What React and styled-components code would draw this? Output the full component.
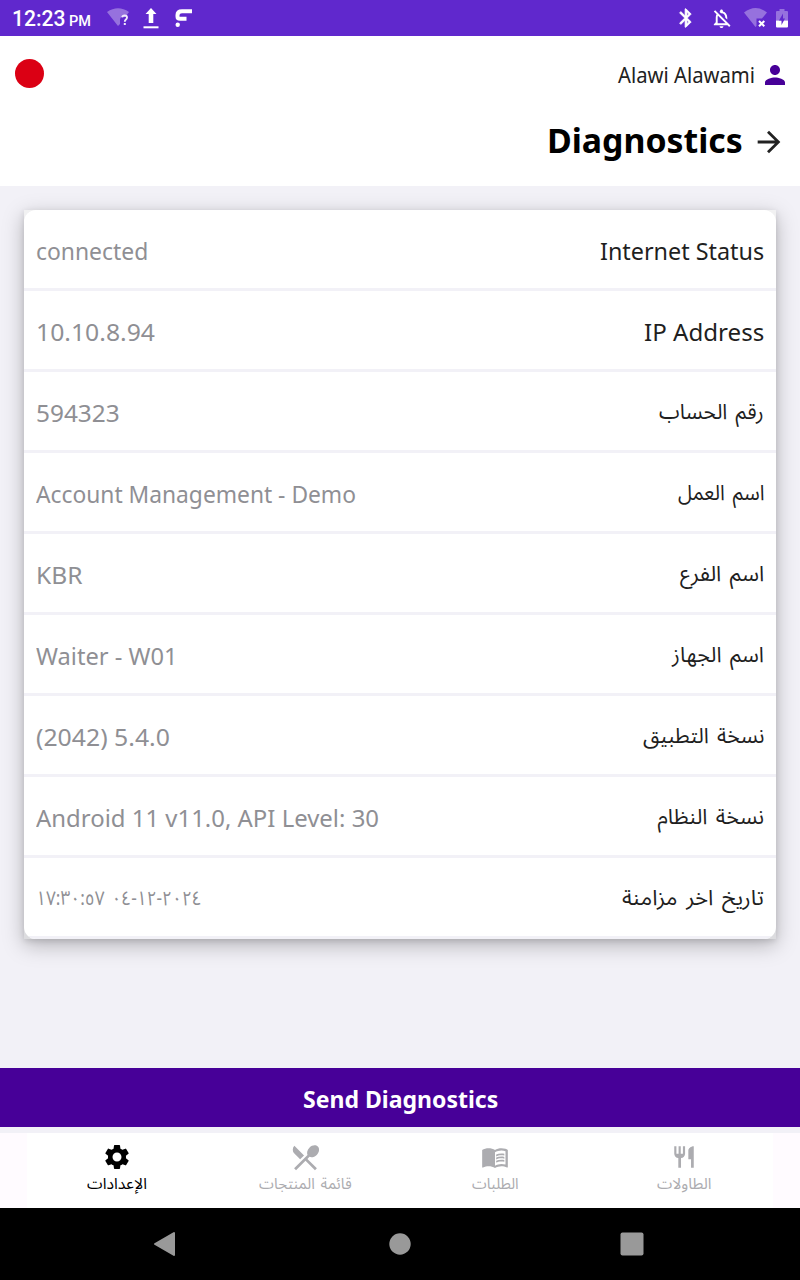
import React, { useLayoutEffect, useRef, useState } from 'react'
import styled, { createGlobalStyle } from 'styled-components'
import {
  MdArrowForward,
  MdBluetooth,
  MdMenuBook,
  MdOutlineNotificationsOff,
  MdPerson,
  MdRestaurant,
  MdRestaurantMenu,
  MdSettings,
} from 'react-icons/md'

const GlobalStyle = createGlobalStyle`
  * {
    box-sizing: border-box;
  }
  body {
    margin: 0;
    font-family: "Noto Sans", "Noto Sans Arabic", "DejaVu Sans", sans-serif;
  }
  svg {
    display: block;
    flex: none;
  }
`

const Screen = styled.div`
  width: 800px;
  height: 1280px;
  display: flex;
  flex-direction: column;
  background: #f2f1f7;
  overflow: hidden;
`

const StatusBar = styled.div`
  height: 36px;
  flex: none;
  padding: 0 12px 0 12px;
  display: flex;
  align-items: center;
  justify-content: space-between;
  background: #6028cd;
  color: #fff;
  font-family: Roboto, sans-serif;
`

const StatusGroup = styled.div`
  display: flex;
  align-items: center;
`

const Clock = styled.div`
  height: 36px;
  padding-top: 1px;
  display: flex;
  align-items: baseline;
  gap: 3px;
  margin-right: 16px;
`

const StatusIcon = styled.div`
  margin-left: ${(props) => props.$gap || 0}px;
  ${(props) => props.$bold && 'path:not([fill="none"]) { stroke: #fff; stroke-width: 0.8px; }'}
`

const Header = styled.div`
  height: 150px;
  flex: none;
  padding: 0 14px 0 15px;
  background: #fff;
`

const UserRow = styled.div`
  height: 76px;
  display: flex;
  align-items: center;
  justify-content: space-between;
`

const StatusDot = styled.div`
  width: 29px;
  height: 29px;
  margin-bottom: 1px;
  border-radius: 50%;
  background: #db0014;
`

const User = styled.div`
  display: flex;
  align-items: center;
  gap: 5px;
  margin-right: -4px;
  padding-top: 1px;
  color: #222;
`

const TitleRow = styled.div`
  height: 60px;
  display: flex;
  align-items: center;
  justify-content: flex-end;
  gap: 9px;
`

const Title = styled.div`
  padding-bottom: 4px;
`

const Line = styled.div`
  width: ${(props) => props.$width}px;
  display: flex;
  flex: none;
  justify-content: ${(props) => (props.$right ? 'flex-end' : 'flex-start')};
  font-size: ${(props) => props.$size}px;
  font-weight: ${(props) => props.$weight || 400};
  line-height: ${(props) => props.$lineHeight || 36}px;
  color: ${(props) => props.$color || 'inherit'};
`

const Run = styled.span`
  display: block;
  flex: none;
  white-space: nowrap;
  word-spacing: ${(props) => (props.$rtl ? '0.13em' : 'normal')};
  transform-origin: ${(props) => (props.$right ? '100% 50%' : '0 50%')};
`

const Content = styled.div`
  flex: 1;
  padding: 24px 24px 0;
`

const CardShadow = styled.div`
  background: linear-gradient(#f1f1f2, #dcdcdf);
  box-shadow: 0 6px 20px rgba(0, 0, 0, 0.26), 0 2px 6px rgba(0, 0, 0, 0.12);
`

const Card = styled.div`
  border-radius: 12px;
  overflow: hidden;
  background: #fff;
`

const Row = styled.div`
  height: 81px;
  padding: 0 12px;
  display: flex;
  align-items: center;
  justify-content: space-between;
  border-bottom: 3px solid #f2f1f7;
`

const Cell = styled.div`
  padding-top: ${(props) => props.$drop || 0}px;
`

const SendButton = styled.button`
  width: 100%;
  height: 59px;
  flex: none;
  margin-bottom: 6px;
  padding: 3px 0 0;
  display: flex;
  align-items: center;
  justify-content: center;
  border: none;
  background: #470098;
  color: #fff;
  font-family: inherit;
`

const TabBar = styled.div`
  height: 75px;
  flex: none;
  padding: 0 27px;
  background: #fffbff;
`

const Tabs = styled.div`
  height: 100%;
  padding-left: 1px;
  display: grid;
  grid-template-columns: repeat(4, 189.3px);
  justify-content: center;
  background: #fff;
`

const Tab = styled.div`
  display: flex;
  flex-direction: column;
  align-items: center;
  padding-top: 8px;
  color: ${(props) => (props.$active ? '#000' : '#acacb0')};
`

const TabIcon = styled.div`
  height: 32px;
  display: flex;
  align-items: center;
`

const NavBar = styled.div`
  height: 72px;
  flex: none;
  padding: 0 152px;
  display: grid;
  grid-template-columns: 1fr auto 1fr;
  align-items: center;
  background: #000;

  svg:last-child {
    justify-self: end;
  }
`

// Keeps a label at a fixed width, whatever font ends up drawing it
const FitText = ({ width, right, rtl, children, ...rest }) => {
  const ref = useRef(null)
  const [scale, setScale] = useState(1)

  useLayoutEffect(() => {
    setScale(width / ref.current.offsetWidth)
  }, [width, children])

  return (
    <Line $width={width} $right={right} {...rest}>
      <Run
        ref={ref}
        dir={rtl ? 'rtl' : 'ltr'}
        $rtl={rtl}
        $right={right}
        style={{ transform: `scaleX(${scale})` }}
      >
        {children}
      </Run>
    </Line>
  )
}

const WifiUnknownIcon = () => (
  <svg width="22" height="20" viewBox="0 0 22 20">
    <path d="M0 4Q11-3.500 22 4L19 8Q13 8 13 12V16L11 18Z" fill="#fff" fillOpacity=".34" />
    <path d="M15.200 9.300Q15.400 7.500 17.700 7.500Q20 7.600 20 9.500Q20 10.700 18.700 11.700Q17.800 12.500 17.800 13.800" fill="none" stroke="#efe9fb" strokeWidth="1.900" />
    <rect x="16.800" y="15" width="2" height="2" fill="#efe9fb" />
  </svg>
)

const UploadIcon = () => (
  <svg width="16" height="21" viewBox="0 0 16 21">
    <path d="M8 0L13.500 6H10.300V15H5.700V6H2.500Z" fill="#fff" />
    <rect x="0.500" y="18.300" width="15" height="2" fill="#fff" />
  </svg>
)

const BrandIcon = () => (
  <svg width="18" height="19" viewBox="0 0 18 19">
    <path d="M17 2.200H7Q2.500 2.200 2.500 6V7.500Q2.500 9.800 5 9.800H11.500" fill="none" stroke="#fff" strokeWidth="4" />
    <circle cx="2.700" cy="15.800" r="2.200" fill="#fff" />
  </svg>
)

const WifiOffIcon = () => (
  <svg width="23" height="20" viewBox="0 0 23 20">
    <path d="M0 4.500Q11.500-4.500 23 4.500L18 10.500H12.500V18L11.500 19Z" fill="#fff" fillOpacity=".34" />
    <path d="M15 13L20.300 18.300M20.300 13L15 18.300" stroke="#fff" strokeWidth="2" />
  </svg>
)

const BatteryIcon = () => (
  <svg width="12" height="19" viewBox="0 0 12 19">
    <path d="M1 2H3.500V0H8.500V2H11Q12 2 12 3V11.500H0V3Q0 2 1 2Z" fill="#fff" fillOpacity=".34" />
    <path d="M0 11.500H12V17.500Q12 18.500 11 18.500H1Q0 18.500 0 17.500Z" fill="#fff" />
    <path d="M7 4.500L3 11.500H5.500V16L9 9.500H7Z" fill="#6028cd" />
  </svg>
)

const rows = [
  { label: 'Internet Status', labelWidth: 164, value: 'connected', valueWidth: 112 },
  { label: 'IP Address', labelWidth: 120, value: '10.10.8.94', valueWidth: 119 },
  { label: 'رقم الحساب', labelWidth: 105, rtl: true, value: '594323', valueWidth: 84 },
  { label: 'اسم العمل', labelWidth: 86, rtl: true, value: 'Account Management - Demo', valueWidth: 320 },
  { label: 'اسم الفرع', labelWidth: 84, rtl: true, value: 'KBR', valueWidth: 46 },
  { label: 'اسم الجهاز', labelWidth: 92, rtl: true, value: 'Waiter - W01', valueWidth: 142 },
  { label: 'نسخة التطبيق', labelWidth: 121, rtl: true, value: '(2042) 5.4.0', valueWidth: 134 },
  { label: 'نسخة النظام', labelWidth: 107, rtl: true, value: 'Android 11 v11.0, API Level: 30', valueWidth: 343 },
  { label: 'تاريخ اخر مزامنة', labelWidth: 142, rtl: true, value: '٢٠٢٤-١٢-٠٤ ١٧:٣٠:٥٧', valueWidth: 166, valueRtl: true },
]

const tabs = [
  { label: 'الإعدادات', width: 60, icon: <MdSettings size={30} />, active: true },
  { label: 'قائمة المنتجات', width: 93, icon: <MdRestaurantMenu size={33} /> },
  { label: 'الطلبات', width: 47, icon: <MdMenuBook size={28} /> },
  { label: 'الطاولات', width: 55, icon: <MdRestaurant size={26} /> },
]

const App = () => {
  return (
    <Screen>
      <GlobalStyle />
      <StatusBar>
        <StatusGroup>
          <Clock>
            <FitText width={54} $size={21.500} $weight={500}>12:23</FitText>
            <FitText width={22} $size={14.500} $weight={500}>PM</FitText>
          </Clock>
          <StatusIcon><WifiUnknownIcon /></StatusIcon>
          <StatusIcon $gap={14}><UploadIcon /></StatusIcon>
          <StatusIcon $gap={16}><BrandIcon /></StatusIcon>
        </StatusGroup>
        <StatusGroup>
          <StatusIcon $bold><MdBluetooth size={22} /></StatusIcon>
          <StatusIcon $gap={13}><MdOutlineNotificationsOff size={23} /></StatusIcon>
          <StatusIcon $gap={11}><WifiOffIcon /></StatusIcon>
          <StatusIcon $gap={9}><BatteryIcon /></StatusIcon>
        </StatusGroup>
      </StatusBar>

      <Header>
        <UserRow>
          <StatusDot />
          <User>
            <FitText width={137} right $size={21}>Alawi Alawami</FitText>
            <MdPerson size={30} color="#470098" />
          </User>
        </UserRow>
        <TitleRow>
          <Title>
            <FitText width={196} right $size={34.500} $weight={700} $lineHeight={48} $color="#000">Diagnostics</FitText>
          </Title>
          <MdArrowForward size={34} color="#222" />
        </TitleRow>
      </Header>

      <Content>
        <CardShadow>
          <Card>
            {rows.map((row) => (
              <Row key={row.label}>
                <Cell $drop={row.valueRtl ? 2 : 4}>
                  <FitText width={row.valueWidth} rtl={row.valueRtl} $size={row.valueRtl ? 20 : 23.500} $color="#8f8f94">
                    {row.value}
                  </FitText>
                </Cell>
                <Cell $drop={row.rtl ? 0 : 4}>
                  <FitText width={row.labelWidth} right rtl={row.rtl} $size={row.rtl ? 21.500 : 23.500} $color="#1f1f1f">
                    {row.label}
                  </FitText>
                </Cell>
              </Row>
            ))}
          </Card>
        </CardShadow>
      </Content>

      <SendButton>
        <FitText width={195} $size={23.500} $weight={700}>Send Diagnostics</FitText>
      </SendButton>

      <TabBar>
        <Tabs>
          {tabs.map((tab) => (
            <Tab key={tab.label} $active={tab.active}>
              <TabIcon>{tab.icon}</TabIcon>
              <FitText width={tab.width} rtl $size={15.500} $lineHeight={20}>{tab.label}</FitText>
            </Tab>
          ))}
        </Tabs>
      </TabBar>

      <NavBar>
        <svg width="24" height="26" viewBox="0 0 24 26">
          <path d="M22 2V24L3 13Z" fill="#999" stroke="#999" strokeWidth="2" strokeLinejoin="round" />
        </svg>
        <svg width="22" height="22" viewBox="0 0 22 22">
          <circle cx="11" cy="11" r="10.700" fill="#999" />
        </svg>
        <svg width="32" height="24" viewBox="0 0 32 24">
          <rect x="4.500" y="0.500" width="23" height="23" rx="2" fill="#999" />
        </svg>
      </NavBar>
    </Screen>
  )
}

export default App
